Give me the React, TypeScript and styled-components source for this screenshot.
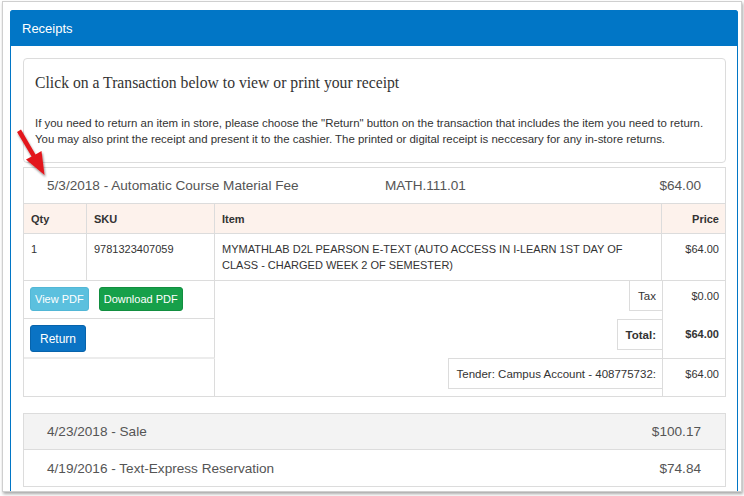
import styled, { createGlobalStyle } from 'styled-components';

const GlobalStyle = createGlobalStyle`
  body {
    margin:0;
    background:#fff;
    font-family:"Liberation Sans", Arial, sans-serif;
  }
`

const Stage = styled.div`
  position:relative;
  width:744px;
  height:496px;
  overflow:hidden;
`
const Frame = styled.div`
  box-sizing:border-box;
  margin:1px 0 0 2px;
  width:740px;
  height:491px;
  border:1px solid #cfcfcf;
  box-shadow:1px 2px 3px rgba(0,0,0,0.35);
  padding:8px 3px 0 7px;
  overflow:hidden;
  background:#fff;
`
const Panel = styled.div`
  border:1px solid #0176c6;
  border-radius:4px 4px 0 0;
  border-bottom:none;
  min-height:520px;
`
const PanelHeading = styled.div`
  height:35px;
  background:#0176c6;
  color:#fff;
  font-size:13px;
  display:flex;
  align-items:center;
  padding-left:12px;
  margin:-1px -1px 0 -1px;
  padding-top:1px;
  border-radius:3px 3px 0 0;
`
const PanelBody = styled.div`
  padding:12px 11px 0 12px;
`
const Well = styled.div`
  border:1px solid #dcdcdc;
  border-radius:4px;
  padding:14px 11px 15px 11px;
  margin-bottom:4px;
`
const WellTitle = styled.div`
  font-family:"Liberation Serif", "Times New Roman", serif;
  font-size:15.7px;
  line-height:20px;
  color:#333;
  margin-bottom:22px;
`
const WellText = styled.p`
  margin:0;
  font-size:11.45px;
  line-height:16px;
  color:#333;
`
const TxPanel = styled.div<{ $gap?: number }>`
  border:1px solid #dcdcdc;
  margin-bottom:${p => p.$gap ?? 0}px;
`
const TxHeader = styled.div<{ $shaded?: boolean }>`
  display:grid;
  grid-template-columns:338px 1fr auto;
  align-items:center;
  height:35px;
  padding:0 24px 0 23px;
  font-size:13.6px;
  color:#555;
  background:${p => (p.$shaded ? '#f3f3f3' : '#fff')};
  & + & {
    border-top:1px solid #dcdcdc;
    height:36px;
  }
`
const Grid = styled.div`
  display:grid;
  grid-template-columns:63px 128px 447px 1fr;
  font-size:11px;
  color:#333;
  border-top:1px solid #dcdcdc;
`
const HeadCell = styled.div<{ $right?: boolean; $last?: boolean }>`
  background:#fdf2ec;
  font-weight:bold;
  height:29px;
  display:flex;
  align-items:center;
  justify-content:${p => (p.$right ? 'flex-end' : 'flex-start')};
  padding:0 ${p => (p.$right ? 6 : 7)}px 0 7px;
  border-right:${p => (p.$last ? 'none' : '1px solid #dcdcdc')};
  border-bottom:1px solid #dcdcdc;
`
const BodyCell = styled.div<{ $right?: boolean; $last?: boolean }>`
  padding:7px ${p => (p.$right ? 6 : 7)}px 7px 7px;
  line-height:16px;
  text-align:${p => (p.$right ? 'right' : 'left')};
  border-right:${p => (p.$last ? 'none' : '1px solid #dcdcdc')};
  border-bottom:1px solid #dcdcdc;
`
const Footer = styled.div`
  display:grid;
  grid-template-columns:191px 1fr 63px;
  grid-template-rows:38px 40px 37px;
  font-size:11px;
  color:#333;
`
const ActionCell = styled.div<{ $row: number; $line?: string }>`
  grid-column:1;
  grid-row:${p => p.$row};
  display:flex;
  align-items:flex-start;
  gap:10px;
  padding:6px 0 0 6px;
  border-right:1px solid #dcdcdc;
  border-bottom:${p => p.$line ?? 'none'};
`
const LabelCell = styled.div<{ $row: number }>`
  grid-column:2;
  grid-row:${p => p.$row};
  display:flex;
  justify-content:flex-end;
  align-items:flex-start;
`
const LabelBox = styled.div<{ $top?: boolean; $shift?: number; $bold?: boolean }>`
  height:29px;
  display:flex;
  align-items:center;
  padding:0 6px 0 8px;
  border:1px solid #dcdcdc;
  border-right:none;
  border-top:${p => (p.$top ? '1px solid #dcdcdc' : 'none')};
  margin-top:${p => p.$shift ?? 0}px;
  font-weight:${p => (p.$bold ? 'bold' : 'normal')};
  font-size:11.5px;
`
const PriceCell = styled.div<{ $row: number; $bold?: boolean; $line?: boolean }>`
  grid-column:3;
  grid-row:${p => p.$row};
  border-left:1px solid #dcdcdc;
  border-bottom:${p => (p.$line ? '1px solid #dcdcdc' : 'none')};
  text-align:right;
  padding:7px 6px 0 0;
  line-height:16px;
  font-weight:${p => (p.$bold ? 'bold' : 'normal')};
`
const Button = styled.button<{ $bg: string; $edge: string; $h?: number; $size?: number; $pad?: number }>`
  font-family:"Liberation Sans", Arial, sans-serif;
  font-size:${p => p.$size ?? 11}px;
  color:#fff;
  background:${p => p.$bg};
  border:1px solid ${p => p.$edge};
  border-radius:3px;
  height:${p => p.$h ?? 24}px;
  padding:0 ${p => p.$pad ?? 4}px;
  cursor:pointer;
`
const Arrow = styled.svg`
  position:absolute;
  left:0;
  top:0;
  pointer-events:none;
`

const items = [
  { date: '4/23/2018 - Sale', amount: '$100.17', shaded: true },
  { date: '4/19/2016 - Text-Express Reservation', amount: '$74.84', shaded: false },
]

export default function App() {
  return (
    <Stage>
      <GlobalStyle />
      <Frame>
        <Panel>
          <PanelHeading>Receipts</PanelHeading>
          <PanelBody>
            <Well>
              <WellTitle>Click on a Transaction below to view or print your receipt</WellTitle>
              <WellText>
                If you need to return an item in store, please choose the "Return" button on the transaction that includes the item you need to return.
                <br />
                You may also print the receipt and present it to the cashier. The printed or digital receipt is neccesary for any in-store returns.
              </WellText>
            </Well>

            <TxPanel $gap={16}>
              <TxHeader>
                <span>5/3/2018 - Automatic Course Material Fee</span>
                <span>MATH.111.01</span>
                <span>$64.00</span>
              </TxHeader>
              <Grid>
                <HeadCell>Qty</HeadCell>
                <HeadCell>SKU</HeadCell>
                <HeadCell>Item</HeadCell>
                <HeadCell $right $last>Price</HeadCell>
                <BodyCell>1</BodyCell>
                <BodyCell>9781323407059</BodyCell>
                <BodyCell>
                  MYMATHLAB D2L PEARSON E-TEXT (AUTO ACCESS IN I-LEARN 1ST DAY OF
                  <br />
                  CLASS - CHARGED WEEK 2 OF SEMESTER)
                </BodyCell>
                <BodyCell $right $last>$64.00</BodyCell>
              </Grid>
              <Footer>
                <ActionCell $row={1} $line="1px solid #dcdcdc">
                  <Button $bg="#5bc0de" $edge="#52b7d6">View PDF</Button>
                  <Button $bg="#16a04a" $edge="#128e40">Download PDF</Button>
                </ActionCell>
                <ActionCell $row={2} $line="2px solid #ececec">
                  <Button $bg="#0a73c4" $edge="#0763ab" $h={27} $size={12} $pad={9}>Return</Button>
                </ActionCell>
                <ActionCell $row={3} />
                <LabelCell $row={1}>
                  <LabelBox>Tax</LabelBox>
                </LabelCell>
                <LabelCell $row={2}>
                  <LabelBox $top $bold>Total:</LabelBox>
                </LabelCell>
                <LabelCell $row={3}>
                  <LabelBox $top $shift={-1}>Tender: Campus Account - 408775732:</LabelBox>
                </LabelCell>
                <PriceCell $row={1}>$0.00</PriceCell>
                <PriceCell $row={2} $bold $line>$64.00</PriceCell>
                <PriceCell $row={3}>$64.00</PriceCell>
              </Footer>
            </TxPanel>

            <TxPanel>
              {items.map(t => (
                <TxHeader key={t.date} $shaded={t.shaded}>
                  <span>{t.date}</span>
                  <span />
                  <span>{t.amount}</span>
                </TxHeader>
              ))}
            </TxPanel>
          </PanelBody>
        </Panel>
      </Frame>

      <Arrow width="60" height="190" viewBox="0 0 60 190">
        <defs>
          <filter id="arrowShadow" x="-50%" y="-50%" width="200%" height="200%">
            <feDropShadow dx="1" dy="2" stdDeviation="1.2" floodColor="#000" floodOpacity="0.45" />
          </filter>
        </defs>
        <g filter="url(#arrowShadow)" fill="#e3191d">
          <path d="M17 132 L21 129.6 L35.5 154.6 L41.5 151 L44.5 175 L26 159.6 L31.6 156.4 Z" />
        </g>
      </Arrow>
    </Stage>
  )
}
